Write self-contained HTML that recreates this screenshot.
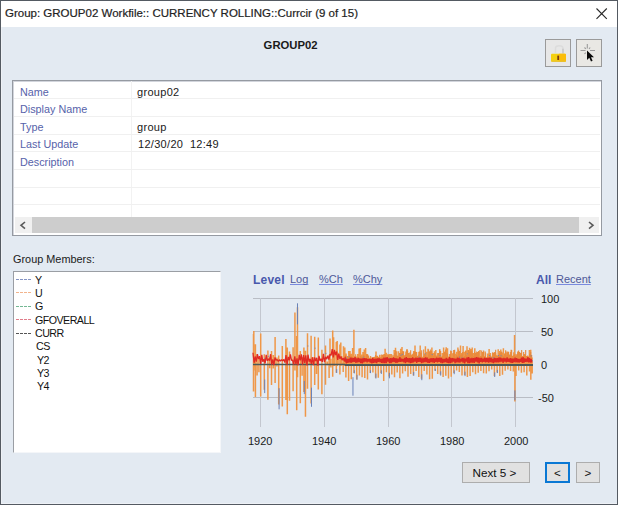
<!DOCTYPE html>
<html><head><meta charset="utf-8">
<style>
*{margin:0;padding:0;box-sizing:border-box}
html,body{width:618px;height:505px;overflow:hidden;background:#e3eaf2;font-family:"Liberation Sans",sans-serif}
.a{position:absolute;white-space:pre;line-height:1}
#win{position:absolute;left:0;top:0;width:618px;height:505px;border:1px solid #545a62;background:#e3eaf2;box-shadow:inset 1px -1px 0 #eef1f6}
#title{position:absolute;left:0;top:0;width:616px;height:26px;background:#fff}
.lbl{color:#5662aa;font-size:10.8px}
.val{color:#1a1a1a;font-size:11px;letter-spacing:0.3px}
.sep{position:absolute;left:14px;width:586px;height:1px;background:#f0f0f0}
.li{font-size:10.7px;color:#111;letter-spacing:-0.55px}
.d{display:inline-block;width:15px;height:1px;vertical-align:middle}
.lk{font-size:11px;color:#4e5898;text-decoration:underline;text-decoration-color:#7a8ade;text-decoration-skip-ink:none}
.ax{font-size:11px;color:#1a1a1a}
.btn{background:#e1e1e1;border:1px solid #adadad;font-size:11.7px;padding-top:1px;color:#111;display:flex;align-items:center;justify-content:center;line-height:1}
</style></head><body>
<div id="win">
 <div id="title"></div>
</div>
<div class="a" style="left:5px;top:8px;font-size:11.5px;color:#222;-webkit-text-stroke:0.2px #222">Group: GROUP02 Workfile:: CURRENCY ROLLING::Currcir (9 of 15)</div>
<svg class="a" style="left:594px;top:6px" width="15" height="15"><path d="M2.5 2.5L12.8 12.8M12.8 2.5L2.5 12.8" stroke="#2a2a2a" stroke-width="1.1"/></svg>

<div class="a" style="left:263.6px;top:40px;font-size:11.3px;font-weight:bold;color:#1a1a1a">GROUP02</div>

<!-- lock buttons -->
<div class="a" style="left:545px;top:39px;width:26px;height:28px;border:1px solid #9a9a9a;background:#e7e7e7"></div>
<div class="a" style="left:576px;top:39px;width:26px;height:28px;border:1px solid #9a9a9a;background:#e9e8e4"></div>
<svg class="a" style="left:545px;top:39px" width="26" height="28">
 <path d="M10.5 14V9.3Q10.5 6.8 14.3 6.8Q18 6.8 18 9.3V14.5" stroke="#dcdcdc" stroke-width="1.5" fill="none"/>
 <path d="M18 9.8V14.5" stroke="#c0c0c0" stroke-width="1.1" fill="none"/>
 <rect x="6" y="14.8" width="15" height="8" rx="1" fill="#f4d010"/>
 <rect x="13.5" y="14.8" width="7.5" height="8" rx="1" fill="#fbbd0a"/>
 <rect x="6.5" y="21.6" width="14" height="1.2" fill="#e8c030"/>
 <rect x="12.3" y="16.6" width="1.8" height="4.4" fill="#7a3a10"/>
</svg>
<svg class="a" style="left:576px;top:39px" width="26" height="28">
 <g stroke="#9a9a9a" stroke-width="1.1">
  <path d="M4.5 11.5H9.5M14 11.5H19"/>
  <path d="M11.3 5V9.5"/>
  <path d="M8.5 8.5L9.8 9.8M14.2 8.5L13 9.8M8.5 15L9.8 13.6"/>
 </g>
 <path d="M11 11.5V21L13.3 18.8L15 22.5L16.6 21.8L15 18.2H18Z" fill="#0a0a0a"/>
</svg>
<!-- property table -->
<div class="a" style="left:12px;top:80px;width:590px;height:156px;background:#fff;border:1px solid #959aa2;box-shadow:inset 1px 1px 0 #d2d5dc"></div>
<div class="a" style="left:131px;top:81px;width:1px;height:136px;background:#f2f2f2"></div>

<div class="sep" style="top:98px"></div>
<div class="sep" style="top:116px"></div>
<div class="sep" style="top:134px"></div>
<div class="sep" style="top:151px"></div>
<div class="sep" style="top:169px"></div>
<div class="sep" style="top:187px"></div>
<div class="sep" style="top:204px"></div>
<div class="a lbl" style="left:20px;top:87px">Name</div>
<div class="a lbl" style="left:20px;top:104px">Display Name</div>
<div class="a lbl" style="left:20px;top:122px">Type</div>
<div class="a lbl" style="left:20px;top:139px">Last Update</div>
<div class="a lbl" style="left:20px;top:157px">Description</div>
<div class="a val" style="left:137px;top:87px">group02</div>
<div class="a val" style="left:137px;top:122px">group</div>
<div class="a val" style="left:138px;top:139px">12/30/20  12:49</div>
<!-- scrollbar -->
<div class="a" style="left:15px;top:217px;width:584px;height:16px;background:#f0f0f0"></div>
<div class="a" style="left:32px;top:217px;width:547px;height:16px;background:#cdcdcd"></div>
<svg class="a" style="left:0;top:210px" width="618" height="30">
 <path d="M25 12L21 15.3L25 18.6" stroke="#5a5a5a" stroke-width="1.6" fill="none"/>
 <path d="M589 12L593 15.3L589 18.6" stroke="#5a5a5a" stroke-width="1.6" fill="none"/>
</svg>

<div class="a" style="left:13px;top:254px;font-size:10.9px;color:#1a1a1a">Group Members:</div>
<div class="a" style="left:13px;top:271px;width:208px;height:182px;background:#fff;border:1px solid #9a9ea4;border-right-color:#f4f6f9;border-bottom-color:#f4f6f9"></div>


<!-- list items -->
<svg class="a" style="left:0;top:0" width="40" height="340">
 <g stroke-width="1" stroke-dasharray="3 1">
  <path d="M16 279.5H32" stroke="#8494c4"/>
  <path d="M16 292.5H32" stroke="#f2b48c"/>
  <path d="M16 306.5H32" stroke="#74b894"/>
  <path d="M16 319.5H32" stroke="#e07c8a"/>
  <path d="M16 333.5H32" stroke="#555"/>
 </g>
</svg>
<div class="a li" style="left:35px;top:275px">Y</div>
<div class="a li" style="left:35px;top:288px">U</div>
<div class="a li" style="left:35px;top:301px">G</div>
<div class="a li" style="left:35px;top:315px">GFOVERALL</div>
<div class="a li" style="left:35px;top:328px">CURR</div>
<div class="a li" style="left:36px;top:341px">CS</div>
<div class="a li" style="left:37px;top:355px">Y2</div>
<div class="a li" style="left:37px;top:368px">Y3</div>
<div class="a li" style="left:37px;top:381px">Y4</div>

<!-- chart links -->
<div class="a" style="left:253px;top:274px;font-size:12px;font-weight:bold;color:#4858ac;letter-spacing:0.2px">Level</div>
<div class="a lk" style="left:290px;top:274px">Log</div>
<div class="a lk" style="left:319px;top:274px">%Ch</div>
<div class="a lk" style="left:353px;top:274px">%Chy</div>
<div class="a" style="left:536px;top:274px;font-size:12px;font-weight:bold;color:#4858ac">All</div>
<div class="a lk" style="left:556px;top:274px">Recent</div>

<svg class="a" style="left:0;top:0" width="618" height="505">
<path d="M253 298.5H533M253 331.5H533M253 364.5H533M253 397.5H533" stroke="#b9bdc5" stroke-width="1" fill="none"/>
<path d="M260.5 298V427M324.5 298V427M388.5 298V427M451.5 298V427M515.5 298V427" stroke="#c3c7cf" stroke-width="1" fill="none"/>
<path d="M253.50 333.9V391.4M255.30 358.6V367.2M257.10 354.3V375.4M258.90 358.1V372.3M260.70 333.6V396.5M264.30 354.3V389.8M267.90 350.4V399.7M269.70 357.5V368.2M271.50 351.1V384.9M273.30 355.0V368.4M275.10 337.0V382.9M276.90 357.6V366.4M278.70 355.6V404.4M282.30 346.1V406.4M285.90 338.9V400.0M289.50 351.5V400.7M293.10 347.3V391.2M296.70 335.9V410.3M300.30 351.0V403.3M302.10 357.1V375.8M303.90 347.6V392.1M307.50 333.2V388.7M309.30 358.7V364.9M311.10 335.7V403.5M312.90 357.0V365.2M314.70 336.8V385.0M316.50 359.9V373.9M318.30 337.6V389.4M321.90 349.8V394.3M325.50 345.4V384.8M327.30 361.5V365.3M329.10 354.8V377.9M330.90 358.7V367.5M330.00 338.6V366.0M332.70 330.6V376.8M334.50 351.8V366.1M333.60 337.3V366.0M336.30 341.9V372.7M338.10 352.7V364.1M337.20 341.0V366.0M339.90 344.4V374.4M341.70 356.2V364.8M340.80 342.6V366.0M343.50 346.3V364.4M344.80 347.5V365.9M346.10 353.6V364.5M347.40 355.9V365.7M348.70 350.9V364.5M350.00 351.0V365.0M351.30 353.7V364.5M352.60 347.9V364.4M353.90 355.9V364.4M355.20 357.4V365.9M356.50 356.6V364.0M357.80 354.1V365.2M359.10 348.4V364.5M360.40 348.1V364.2M361.70 354.5V365.5M363.00 351.9V365.0M364.30 349.5V365.0M365.60 347.9V364.7M366.90 354.3V364.7M368.20 357.8V364.5M369.50 357.8V365.1M370.80 358.1V364.3M372.10 357.3V364.7M373.40 357.5V364.8M374.70 358.2V364.1M376.00 351.6V364.5M377.30 356.3V365.8M378.60 357.9V365.0M379.90 354.8V365.5M381.20 356.9V364.7M382.50 355.0V365.4M383.80 355.6V364.9M385.10 348.7V365.0M386.40 352.8V365.1M387.70 356.4V364.6M389.00 353.9V365.9M390.30 354.0V364.9M391.60 357.3V365.0M392.90 355.2V365.6M394.20 350.0V364.0M395.50 347.7V365.3M396.80 351.3V364.4M398.10 357.8V364.1M399.40 356.4V365.7M400.70 348.7V364.0M402.00 347.1V365.6M403.30 355.7V364.5M404.60 355.9V365.9M405.90 351.5V365.1M407.20 349.2V366.0M408.50 356.9V365.6M409.80 352.4V365.3M411.10 354.6V365.0M412.40 355.9V364.5M413.70 351.1V364.5M415.00 345.4V365.8M416.30 354.2V365.2M417.60 356.8V365.4M418.90 351.8V365.5M420.20 345.4V364.6M421.50 356.9V364.6M422.80 357.2V364.6M424.10 356.1V365.6M425.40 346.3V364.9M426.70 351.7V364.8M428.00 348.7V365.8M429.30 355.1V365.8M430.60 356.3V364.4M431.90 347.6V365.9M433.20 352.9V365.1M434.50 351.2V365.0M435.80 349.9V365.2M437.10 355.6V364.2M438.40 354.1V364.9M439.70 349.2V365.6M441.00 356.6V364.6M442.30 352.9V364.4M443.60 347.4V364.5M444.90 351.8V364.3M446.20 347.2V365.7M447.50 348.2V364.8M448.80 356.6V364.1M450.10 355.7V365.9M451.40 351.1V365.8M452.70 357.4V364.4M454.00 356.2V364.6M455.30 353.7V364.7M456.60 351.8V366.0M457.90 347.6V365.5M459.20 351.6V365.0M460.50 345.5V365.4M461.80 352.9V365.7M463.10 346.0V365.3M464.40 351.8V364.1M465.70 350.6V364.2M467.00 346.3V364.1M468.30 350.0V365.8M469.60 347.8V364.4M470.90 349.0V364.2M472.20 347.6V364.7M473.50 353.0V365.9M474.80 348.3V364.1M476.10 356.5V364.8M477.40 355.6V364.8M478.70 351.6V364.5M480.00 350.0V364.8M481.30 356.3V365.7M482.60 355.1V365.8M483.90 356.1V364.8M485.20 351.4V364.8M486.50 357.7V365.8M487.80 353.4V364.9M489.10 348.9V364.9M490.40 353.1V364.7M491.70 356.7V365.4M493.00 353.0V365.3M494.30 353.5V364.8M495.60 353.2V364.9M496.90 357.1V364.7M498.20 349.2V365.5M499.50 353.3V365.6M500.80 349.5V365.4M502.10 352.5V365.2M503.40 348.3V366.0M504.70 353.4V364.1M506.00 351.6V364.5M507.30 352.8V365.8M508.60 357.4V364.5M509.90 358.0V364.3M511.20 349.7V364.5M512.50 358.0V364.3M513.80 352.2V364.3M515.10 353.7V365.2M516.40 356.6V365.6M517.70 353.6V364.2M519.00 354.1V365.4M520.30 353.0V365.5M521.60 358.2V365.1M522.90 358.1V364.9M524.20 353.9V364.2M525.50 357.8V364.1M526.80 357.0V365.0M528.10 356.7V366.0M529.40 350.0V365.0M530.70 349.7V365.7M532.00 357.6V365.5M343.20 362.8V372.1M345.90 363.6V377.4M348.60 362.8V381.0M351.30 362.0V379.2M354.00 363.5V372.9M356.70 362.5V379.4M359.40 362.3V375.4M362.10 363.4V377.3M364.80 363.3V378.0M367.50 363.3V379.5M370.20 363.5V373.1M372.90 362.2V372.6M375.60 362.4V377.7M378.30 362.3V377.7M381.00 363.9V373.0M383.70 363.7V380.9M386.40 362.3V372.2M389.10 363.1V376.5M391.80 363.5V374.4M394.50 363.0V377.3M397.20 363.8V372.5M399.90 362.8V378.2M402.60 363.7V373.5M405.30 363.9V371.3M408.00 362.2V376.7M410.70 362.1V373.9M413.40 363.1V375.5M416.10 362.4V371.0M418.80 363.1V377.1M421.50 363.2V378.7M424.20 363.0V371.0M426.90 362.6V374.5M429.60 362.5V379.2M432.30 363.2V378.8M435.00 363.1V370.8M437.70 363.2V374.1M440.40 362.6V374.4M443.10 364.0V376.9M445.80 363.7V375.7M448.50 362.4V378.5M451.20 362.1V376.8M453.90 362.7V372.9M456.60 363.4V370.6M459.30 363.2V371.9M462.00 363.0V375.4M464.70 362.6V375.0M467.40 363.7V377.1M470.10 363.8V376.1M472.80 363.3V372.3M475.50 363.1V374.2M478.20 363.7V372.7M480.90 362.2V370.9M483.60 363.8V373.2M486.30 362.4V373.6M489.00 363.9V371.3M491.70 362.1V369.5M494.40 363.2V376.0M497.10 362.6V372.5M499.80 362.8V375.9M502.50 363.7V374.8M505.20 363.9V370.8M507.90 363.9V369.6M510.60 362.7V370.9M513.30 362.9V371.4M516.00 362.4V376.0M518.70 363.9V370.5M521.40 363.9V372.8M524.10 363.6V372.2M526.80 363.5V375.5M529.50 362.2V371.6M532.20 363.7V373.6M253.82 331.0V370.6M255.42 344.2V397.0M294.94 312.5V370.6M297.49 307.2V377.2M305.46 350.8V416.8M287.29 347.5V414.2M353.91 329.7V367.3M514.56 335.0V367.3M514.88 360.7V401.6M530.82 354.8V379.8" stroke="#ef9748" stroke-width="1.5" fill="none"/>
<path d="M344.67 357.8V361.4M345.67 355.0V361.4M346.67 358.6V361.4M347.67 356.4V361.4M348.67 357.1V361.4M349.67 354.3V361.4M350.67 355.8V361.4M351.67 356.3V361.4M352.67 358.6V361.4M353.67 358.8V361.4M354.67 356.0V361.4M355.67 354.3V361.4M356.67 358.9V361.4M357.67 357.0V361.4M358.67 357.3V361.4M359.67 359.3V361.4M360.67 355.9V361.4M361.67 356.8V361.4M362.67 356.7V361.4M363.67 354.8V361.4M364.67 355.9V361.4M365.67 358.0V361.4M366.67 354.1V361.4M367.67 354.3V361.4M368.67 355.5V361.4M369.67 358.7V361.4M370.67 355.9V361.4M371.67 359.4V361.4M372.67 357.8V361.4M373.67 357.0V361.4M374.67 356.8V361.4M375.67 355.0V361.4M376.67 356.3V361.4M377.67 355.8V361.4M378.67 356.9V361.4M379.67 355.3V361.4M380.67 358.3V361.4M381.67 354.4V361.4M382.67 354.7V361.4M383.67 354.3V361.4M384.67 354.1V361.4M385.67 355.0V361.4M386.67 357.8V361.4M387.67 354.3V361.4M388.67 354.9V361.4M389.67 356.8V361.4M390.67 358.8V361.4M391.67 354.0V361.4M392.67 358.2V361.4M393.67 358.4V361.4M394.67 353.0V361.4M395.67 350.6V361.4M396.67 355.3V361.4M397.67 355.7V361.4M398.67 351.2V361.4M399.67 352.9V361.4M400.67 352.9V361.4M401.67 352.7V361.4M402.67 351.0V361.4M403.67 351.2V361.4M404.67 355.3V361.4M405.67 354.5V361.4M406.67 349.5V361.4M407.67 350.8V361.4M408.67 353.1V361.4M409.67 354.9V361.4M410.67 350.3V361.4M411.67 355.2V361.4M412.67 353.7V361.4M413.67 352.7V361.4M414.67 351.3V361.4M415.67 351.8V361.4M416.67 352.0V361.4M417.67 355.8V361.4M418.67 354.7V361.4M419.67 351.5V361.4M420.67 352.8V361.4M421.67 350.2V361.4M422.67 356.8V361.4M423.67 349.6V361.4M424.67 353.5V361.4M425.67 355.1V361.4M426.67 356.6V361.4M427.67 356.9V361.4M428.67 349.5V361.4M429.67 351.2V361.4M430.67 349.6V361.4M431.67 350.7V361.4M432.67 354.0V361.4M433.67 355.9V361.4M434.67 353.1V361.4M435.67 355.5V361.4M436.67 356.1V361.4M437.67 353.0V361.4M438.67 352.9V361.4M439.67 349.6V361.4M440.67 351.0V361.4M441.67 357.3V361.4M442.67 356.0V361.4M443.67 353.0V361.4M444.67 351.8V361.4M445.67 349.6V361.4M446.67 353.0V361.4M447.67 353.7V361.4M448.67 357.3V361.4M449.67 354.0V361.4M450.67 350.6V361.4M451.67 356.9V361.4M452.67 353.2V361.4M453.67 349.9V361.4M454.67 349.8V361.4M455.67 357.3V361.4M456.67 355.0V361.4M457.67 355.9V361.4M458.67 349.6V361.4M459.67 351.1V361.4M460.67 355.3V361.4M461.67 354.3V361.4M462.67 352.1V361.4M463.67 357.2V361.4M464.67 356.1V361.4M465.67 351.2V361.4M466.67 355.0V361.4M467.67 355.5V361.4M468.67 350.2V361.4M469.67 351.7V361.4M470.67 350.6V361.4M471.67 351.2V361.4M472.67 353.3V361.4M473.67 355.9V361.4M474.67 351.9V361.4M475.67 353.1V361.4M476.67 351.6V361.4M477.67 352.1V361.4M478.67 351.1V361.4M479.67 357.0V361.4M480.67 356.1V361.4M481.67 350.4V361.4M482.67 352.0V361.4M483.67 350.5V361.4M484.67 357.0V361.4M485.67 353.3V361.4M486.67 357.3V361.4M487.67 356.2V361.4M488.67 357.0V361.4M489.67 355.9V361.4M490.67 355.4V361.4M491.67 356.8V361.4M492.67 352.3V361.4M493.67 352.8V361.4M494.67 352.0V361.4M495.67 349.7V361.4M496.67 355.2V361.4M497.67 355.5V361.4M498.67 355.0V361.4M499.67 351.0V361.4M500.67 352.2V361.4M501.67 351.5V361.4M502.67 355.5V361.4M503.67 356.3V361.4M504.67 353.7V361.4M505.67 350.2V361.4M506.67 355.3V361.4M507.67 351.4V361.4M508.67 351.8V361.4M509.67 354.5V361.4M510.67 351.9V361.4M511.67 350.1V361.4M512.67 355.7V361.4M513.67 355.3V361.4M514.67 354.3V361.4M515.67 355.8V361.4M516.67 354.2V361.4M517.67 351.6V361.4M518.67 350.6V361.4M519.67 352.1V361.4M520.67 353.1V361.4M521.67 350.1V361.4M522.67 355.9V361.4M523.67 351.9V361.4M524.67 354.4V361.4M525.67 350.0V361.4M526.67 355.9V361.4M527.67 355.4V361.4M528.67 356.5V361.4M529.67 353.8V361.4M530.67 351.9V361.4M531.67 355.1V361.4" stroke="#e98a3c" stroke-width="1.1" fill="none"/>
<path d="M264.70 379.5V393.1M264.70 358.2V359.2M268.30 355.8V356.8M279.10 388.2V409.3M304.30 380.9V394.1M307.90 345.5V346.5M311.50 387.7V406.8M315.10 347.7V348.7M325.90 352.9V353.9M336.70 369.2V373.0M346.40 357.7V358.7M349.00 356.1V357.1M356.80 359.6V360.6M363.30 356.7V357.7M384.10 359.0V360.0M389.30 357.9V358.9M401.00 354.8V355.8M402.30 353.9V354.9M411.40 358.4V359.4M419.20 356.7V357.7M425.70 353.4V354.4M432.20 354.1V355.1M440.00 355.1V356.1M459.50 356.6V357.6M462.10 357.4V358.4M467.30 353.4V354.4M489.40 354.9V355.9M490.70 357.5V358.5M493.30 357.4V358.4M494.60 357.7V358.7M498.50 355.1V356.1M501.10 355.3V356.3M512.80 360.4V361.4M531.00 355.4V356.4M532.30 360.2V361.2M354.30 370.2V373.4M357.00 374.8V379.7M370.50 370.3V373.1M375.90 373.6V378.5M381.30 370.3V374.0M389.40 372.8V378.3M413.70 372.0V375.7M421.80 374.3V380.2M435.30 368.8V371.0M440.70 371.3V375.6M454.20 370.3V374.2M465.00 371.7V376.1M494.70 372.4V377.0M497.40 369.9V373.1M297.49 303.3V324.4M352.96 377.2V395.7M514.88 390.4V400.3" stroke="#6a82b8" stroke-width="1" fill="none"/>
<path d="M253 364.5H345" stroke="#4a5858" stroke-width="1.3" fill="none"/><path d="M345 365H533" stroke="#4a5858" stroke-width="2.2" fill="none"/>
<path d="M253.0 352.7 L254.1 362.8 L255.2 356.5 L256.3 361.6 L257.4 354.2 L258.5 358.9 L259.6 356.2 L260.7 363.8 L261.8 354.9 L262.9 361.8 L264.0 359.2 L265.1 363.3 L266.2 354.9 L267.3 360.8 L268.4 358.8 L269.5 360.7 L270.6 354.2 L271.7 364.6 L272.8 359.5 L273.9 365.1 L275.0 357.4 L276.1 360.2 L277.2 359.7 L278.3 361.5 L279.4 359.8 L280.5 361.0 L281.6 359.7 L282.7 360.9 L283.8 359.5 L284.9 362.6 L286.0 355.1 L287.1 364.7 L288.2 356.9 L289.3 360.4 L290.4 354.4 L291.5 360.4 L292.6 360.0 L293.7 364.5 L294.8 356.3 L295.9 364.5 L297.0 358.4 L298.1 365.3 L299.2 354.9 L300.3 360.3 L301.4 354.4 L302.5 364.6 L303.6 355.0 L304.7 362.9 L305.8 355.3 L306.9 365.5 L308.0 354.7 L309.1 361.7 L310.2 359.0 L311.3 363.9 L312.4 357.4 L313.5 365.1 L314.6 357.4 L315.7 361.0 L316.8 357.8 L317.9 365.7 L319.0 355.8 L320.1 360.9 L321.2 358.7 L322.3 361.9 L323.4 353.8 L324.5 362.1 L325.6 356.9 L326.7 359.1 L327.8 355.7 L328.9 359.5 L330.0 354.2 L331.1 355.3 L332.2 349.2 L333.3 357.5 L334.4 349.9 L335.5 355.1 L336.6 351.5 L337.7 359.8 L338.8 353.8 L339.9 358.8 L341.0 356.5 L342.1 360.1 L343.2 358.2 L344.3 361.0 L345.4 356.7" stroke="#e02a24" stroke-width="1.3" fill="none" stroke-linejoin="bevel"/>
<path d="M344.7 361.7 L345.5 358.3 L346.3 363.3 L347.1 358.8 L347.9 363.0 L348.7 358.8 L349.5 362.4 L350.3 357.5 L351.1 363.0 L351.9 357.5 L352.7 362.1 L353.5 358.0 L354.3 361.8 L355.1 357.1 L355.9 362.9 L356.7 358.3 L357.5 362.4 L358.3 357.9 L359.1 362.2 L359.9 358.4 L360.7 363.2 L361.5 358.7 L362.3 363.3 L363.1 358.0 L363.9 362.4 L364.7 358.1 L365.5 361.6 L366.3 358.4 L367.1 362.4 L367.9 359.0 L368.7 361.6 L369.5 359.0 L370.3 362.7 L371.1 359.0 L371.9 363.3 L372.7 357.8 L373.5 362.8 L374.3 359.0 L375.1 362.5 L375.9 358.6 L376.7 363.2 L377.5 358.3 L378.3 361.9 L379.1 358.2 L379.9 362.1 L380.7 358.8 L381.5 362.9 L382.3 358.6 L383.1 363.2 L383.9 357.6 L384.7 363.1 L385.5 357.6 L386.3 363.1 L387.1 357.2 L387.9 361.6 L388.7 358.5 L389.5 363.2 L390.3 358.0 L391.1 363.2 L391.9 358.1 L392.7 362.2 L393.5 357.4 L394.3 362.0 L395.1 358.2 L395.9 363.0 L396.7 358.3 L397.5 362.7 L398.3 358.7 L399.1 361.9 L399.9 357.1 L400.7 361.9 L401.5 358.7 L402.3 361.6 L403.1 358.9 L403.9 362.3 L404.7 357.8 L405.5 363.1 L406.3 357.1 L407.1 362.2 L407.9 358.1 L408.7 362.3 L409.5 358.1 L410.3 363.1 L411.1 358.2 L411.9 362.9 L412.7 357.4 L413.5 362.3 L414.3 358.4 L415.1 361.7 L415.9 357.7 L416.7 363.0 L417.5 357.8 L418.3 362.0 L419.1 357.7 L419.9 362.0 L420.7 357.5 L421.5 363.2 L422.3 358.4 L423.1 362.6 L423.9 358.1 L424.7 362.2 L425.5 357.3 L426.3 362.1 L427.1 357.5 L427.9 362.9 L428.7 358.8 L429.5 363.0 L430.3 358.3 L431.1 362.2 L431.9 358.2 L432.7 362.3 L433.5 358.2 L434.3 362.9 L435.1 358.4 L435.9 361.8 L436.7 357.6 L437.5 362.3 L438.3 358.0 L439.1 361.9 L439.9 357.7 L440.7 362.7 L441.5 357.8 L442.3 363.2 L443.1 358.9 L443.9 362.5 L444.7 359.0 L445.5 362.2 L446.3 357.8 L447.1 363.0 L447.9 358.5 L448.7 363.2 L449.5 357.2 L450.3 363.2 L451.1 358.2 L451.9 362.7 L452.7 358.1 L453.5 361.7 L454.3 358.5 L455.1 363.1 L455.9 358.7 L456.7 362.4 L457.5 357.7 L458.3 362.3 L459.1 357.9 L459.9 362.6 L460.7 358.8 L461.5 361.6 L462.3 358.0 L463.1 362.7 L463.9 357.9 L464.7 363.3 L465.5 358.7 L466.3 361.7 L467.1 357.4 L467.9 363.1 L468.7 357.1 L469.5 363.1 L470.3 358.3 L471.1 362.6 L471.9 357.8 L472.7 362.6 L473.5 358.2 L474.3 363.0 L475.1 357.5 L475.9 361.6 L476.7 357.2 L477.5 362.3 L478.3 357.6 L479.1 363.3 L479.9 357.8 L480.7 362.0 L481.5 357.8 L482.3 362.3 L483.1 358.7 L483.9 361.8 L484.7 357.5 L485.5 362.3 L486.3 358.2 L487.1 362.2 L487.9 357.8 L488.7 362.7 L489.5 357.5 L490.3 362.1 L491.1 357.9 L491.9 362.5 L492.7 358.9 L493.5 363.1 L494.3 357.8 L495.1 362.4 L495.9 358.0 L496.7 362.5 L497.5 358.2 L498.3 362.5 L499.1 357.4 L499.9 362.2 L500.7 357.5 L501.5 361.6 L502.3 358.4 L503.1 362.9 L503.9 357.8 L504.7 361.7 L505.5 358.3 L506.3 362.3 L507.1 357.4 L507.9 361.8 L508.7 358.7 L509.5 362.1 L510.3 358.2 L511.1 362.8 L511.9 358.3 L512.7 362.8 L513.5 358.6 L514.3 362.2 L515.1 357.5 L515.9 362.3 L516.7 358.0 L517.5 362.3 L518.3 358.9 L519.1 362.5 L519.9 359.0 L520.7 361.8 L521.5 357.6 L522.3 362.9 L523.1 357.1 L523.9 362.9 L524.7 358.3 L525.5 361.9 L526.3 358.6 L527.1 362.0 L527.9 357.2 L528.7 362.3 L529.5 358.0 L530.3 362.5 L531.1 358.8 L531.9 362.6" stroke="#dc2824" stroke-width="1.3" fill="none" stroke-linejoin="bevel"/>
</svg>
<div class="a ax" style="left:248px;top:436px">1920</div>
<div class="a ax" style="left:312px;top:436px">1940</div>
<div class="a ax" style="left:376px;top:436px">1960</div>
<div class="a ax" style="left:440px;top:436px">1980</div>
<div class="a ax" style="left:504px;top:436px">2000</div>
<div class="a ax" style="left:541px;top:294px">100</div>
<div class="a ax" style="left:541px;top:327px">50</div>
<div class="a ax" style="left:541px;top:360px">0</div>
<div class="a ax" style="left:538px;top:393px">-50</div>

<!-- bottom buttons -->
<div class="a btn" style="left:462px;top:462px;width:68px;height:21px;padding-right:3px">Next 5 &gt;</div>
<div class="a btn" style="left:545px;top:462px;width:25px;height:21px;border:2px solid #0a78d4">&lt;</div>
<div class="a btn" style="left:576px;top:462px;width:24px;height:21px">&gt;</div>
</body></html>
